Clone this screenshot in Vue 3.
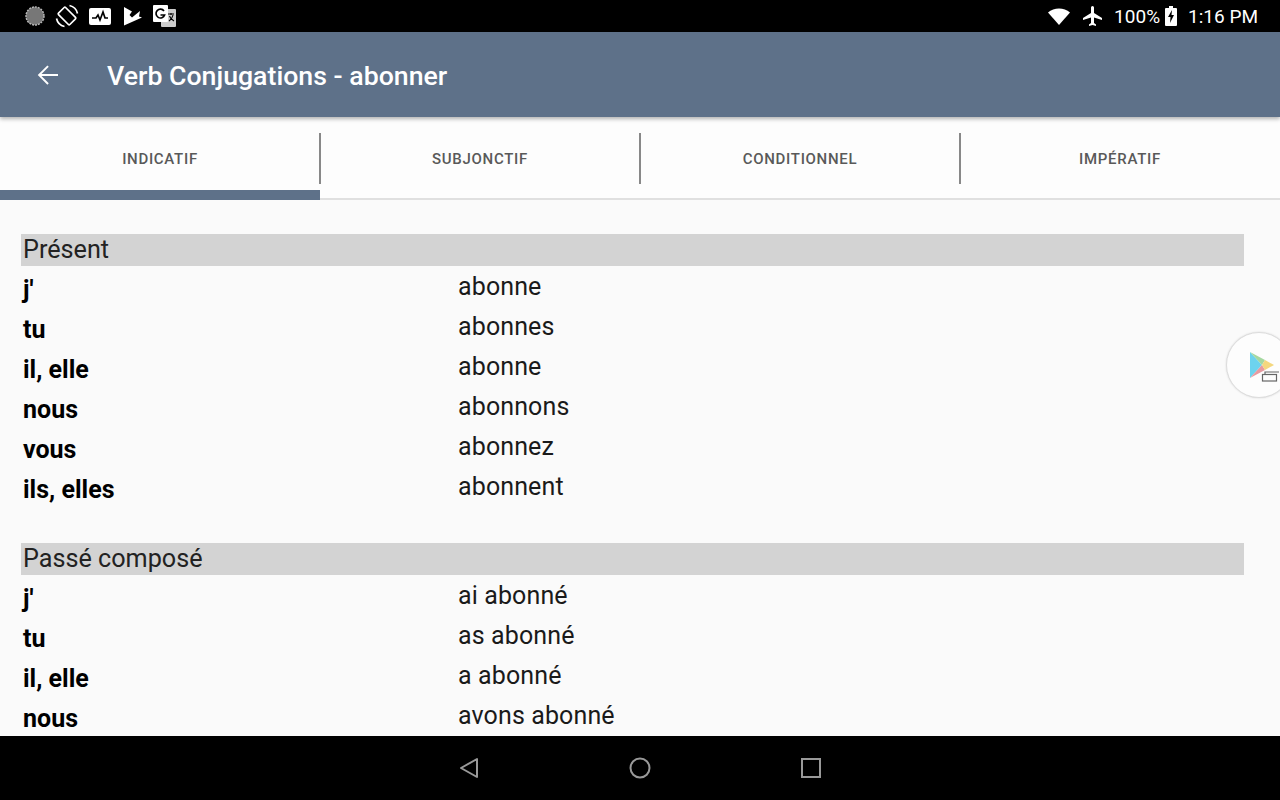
<template>
  <div class="screen">
    <div class="status-bar">
      <div class="status-left">
        <svg width="20" height="20" viewBox="0 0 20 20"><circle cx="10" cy="10" r="9" fill="#777" stroke="#bbb" stroke-width="1.4" stroke-dasharray="2 1" /></svg>
        <svg width="24" height="24" viewBox="0 0 24 24" fill="none" stroke="#fff" stroke-width="1.700">
          <rect x="7" y="4" width="10" height="16" rx="1" transform="rotate(-45 12 12)" />
          <path d="M14.500 1.500A10.500 10.500 0 0 1 22.500 9.500M9.500 22.500A10.500 10.500 0 0 1 1.500 14.500" />
        </svg>
        <svg width="22" height="17" viewBox="0 0 22 17">
          <rect width="22" height="17" rx="2" fill="#fff" />
          <path d="M3 10h4l2-3 2 5 3-8 2 6h3" fill="none" stroke="#000" stroke-width="1.700" />
        </svg>
        <svg class="check" width="18" height="19" viewBox="0 0 18 19">
          <path d="M0 0l8 4.500-2.500 3.500 2.500 2.500 8-6.500-1 5.500 3 1-18 8z" fill="#fff" />
        </svg>
        <svg width="23" height="22" viewBox="0 0 23 22">
          <rect x="8" y="4" width="15" height="18" rx="1" fill="#ccc" />
          <rect x="0" y="0" width="15" height="17" rx="1" fill="#fff" />
          <path d="M11 6a4.400 4.400 0 1 0 .6 4H7.500" fill="none" stroke="#000" stroke-width="1.700" />
          <path d="M15 9h6M18 8v2M20 10c-.6 3-2.400 5-4 6M16.500 11c.6 2 2.500 4 4.500 5" fill="none" stroke="#000" stroke-width="1.100" />
        </svg>
      </div>
      <div class="status-right">
        <svg class="wifi" width="22" height="17" viewBox="0 0 22 17">
          <path d="M0 4.500C6-1 16-1 22 4.500L11 17z" fill="#fff" />
        </svg>
        <svg class="plane" width="24" height="24" viewBox="0 0 24 24">
          <path d="M21 16v-2l-8-5V3.500a1.500 1.500 0 0 0-3 0V9l-8 5v2l8-2.500V19l-2 1.500V22l3.500-1 3.500 1v-1.500L13 19v-5.500z" fill="#fff" />
        </svg>
        <span class="pct">100%</span>
        <svg class="batt" width="12" height="20" viewBox="0 0 12 20">
          <path d="M4 0h4v2h3a1 1 0 0 1 1 1v16a1 1 0 0 1-1 1H1a1 1 0 0 1-1-1V3a1 1 0 0 1 1-1h3z" fill="#fff" />
          <path d="M7 4L3 11h2.500L5 17l4-8H6.500z" fill="#000" />
        </svg>
        <span class="clock">1:16 PM</span>
      </div>
    </div>

    <header class="toolbar">
      <svg class="back" width="30" height="30" viewBox="0 0 24 24">
        <path d="M20 11.200H6.800l5.800-5.800L11.500 4.300 3.800 12l7.700 7.700 1.100-1.100-5.800-5.800H20z" fill="#fff" />
      </svg>
      <h1 class="title">Verb Conjugations - abonner</h1>
    </header>

    <nav class="tabs">
      <div v-for="(tab, i) in tabs" :key="tab" class="tab" :class="{ active: i === 0 }">
        <span>{{ tab }}</span>
      </div>
    </nav>

    <main class="content">
      <section v-for="tense in tenses" :key="tense.name" class="tense">
        <div class="tense-name">{{ tense.name }}</div>
        <div v-for="row in tense.rows" :key="row[0]" class="row">
          <span class="pronoun">{{ row[0] }}</span>
          <span class="verb">{{ row[1] }}</span>
        </div>
      </section>
    </main>

    <div class="play-bubble">
      <svg width="32" height="32" viewBox="0 0 32 32">
        <path d="M2 1l12 13L2 27z" fill="#6dd3ee" />
        <path d="M2 1l15 8-3 5z" fill="#a5d8a0" />
        <path d="M2 27l15-8-3-5z" fill="#e79aa0" />
        <path d="M17 9l9 5-9 5-3-5z" fill="#f4d77e" />
        <rect x="14.500" y="23.500" width="14" height="6.500" fill="#fdfdfd" stroke="#666" stroke-width="1.200" />
        <path d="M17 23v-2h14" fill="none" stroke="#666" stroke-width="1.200" />
      </svg>
    </div>

    <footer class="nav-bar">
      <svg width="20" height="22" viewBox="0 0 20 22"><path d="M18 2v18L2 11z" fill="none" stroke="#999" stroke-width="2" stroke-linejoin="round" /></svg>
      <svg width="22" height="22" viewBox="0 0 22 22"><circle cx="11" cy="11" r="9.500" fill="none" stroke="#999" stroke-width="2" /></svg>
      <svg width="20" height="20" viewBox="0 0 20 20"><rect x="1" y="1" width="18" height="18" fill="none" stroke="#999" stroke-width="2" /></svg>
    </footer>
  </div>
</template>

<script setup>
const tabs = ['INDICATIF', 'SUBJONCTIF', 'CONDITIONNEL', 'IMPÉRATIF']

const tenses = [
  {
    name: 'Présent',
    rows: [
      ["j'", 'abonne'],
      ['tu', 'abonnes'],
      ['il, elle', 'abonne'],
      ['nous', 'abonnons'],
      ['vous', 'abonnez'],
      ['ils, elles', 'abonnent'],
    ],
  },
  {
    name: 'Passé composé',
    rows: [
      ["j'", 'ai abonné'],
      ['tu', 'as abonné'],
      ['il, elle', 'a abonné'],
      ['nous', 'avons abonné'],
    ],
  },
]
</script>

<style>
html, body { margin: 0; background: #000; overflow: hidden; }
</style>

<style scoped>
.screen {
  position: relative;
  width: 1280px;
  height: 800px;
  display: flex;
  flex-direction: column;
  overflow: hidden;
  background: #fafafa;
  font-family: Roboto, "Liberation Sans", sans-serif;
}

.status-bar {
  flex: 0 0 32px;
  display: flex;
  justify-content: space-between;
  align-items: center;
  background: #000;
  color: #fff;
  padding: 0 22px 0 25px;
}

.status-left { display: flex; align-items: center; gap: 10px; }
.status-left .check { margin: 0 1px 0 3px; }
.status-right { display: flex; align-items: center; }

.wifi { margin-right: 11px; }
.plane { margin-right: 9px; }
.pct { font-size: 19px; margin-right: 5px; }
.batt { margin-right: 11px; }
.clock { font-size: 19px; }

.toolbar {
  position: relative;
  z-index: 2;
  flex: 0 0 85px;
  display: flex;
  align-items: center;
  background: #5e7189;
  box-shadow: 0 2px 4px rgba(0, 0, 0, 0.3);
  padding-left: 33px;
}

.title {
  margin: 3px 0 0 44px;
  font-size: 26.700px;
  font-weight: 500;
  color: #fff;
}

.tabs {
  flex: 0 0 83px;
  display: flex;
  box-sizing: border-box;
  background: #fdfdfd;
  border-bottom: 2px solid #e0e0e0;
}

.tab {
  position: relative;
  flex: 1;
  display: flex;
  align-items: center;
  justify-content: center;
  padding-top: 3px;
  font-size: 15px;
  font-weight: 500;
  letter-spacing: 0.7px;
  color: #595959;
}

.tab:not(:last-child)::after {
  content: '';
  position: absolute;
  right: -1px;
  top: 16px;
  height: 51px;
  width: 2px;
  background: #888;
}

.tab.active::before {
  content: '';
  position: absolute;
  left: 0;
  right: 0;
  bottom: -2px;
  height: 10px;
  background: #5e7189;
}

.content {
  flex: 1;
  min-height: 0;
  overflow: hidden;
  padding: 34px 36px 0 21px;
}

.tense { margin-bottom: 37px; }

.tense-name {
  height: 32px;
  line-height: 31px;
  padding-left: 2px;
  font-size: 25.200px;
  color: #222;
  background: #d3d3d3;
}

.row {
  display: flex;
  height: 40px;
  padding-left: 2px;
  font-size: 25px;
  color: #1a1a1a;
}

.pronoun {
  width: 435px;
  line-height: 47px;
  font-weight: 700;
  color: #000;
}

.verb { line-height: 42px; letter-spacing: 0.12px; }

.play-bubble {
  position: absolute;
  left: 1226px;
  top: 332px;
  width: 66px;
  height: 66px;
  box-sizing: border-box;
  display: flex;
  align-items: center;
  padding: 3px 0 0 21px;
  border-radius: 50%;
  background: #fdfdfd;
  border: 1px solid #ddd;
  box-shadow: 0 0 2px rgba(0, 0, 0, 0.15);
}

.nav-bar {
  flex: 0 0 64px;
  display: flex;
  align-items: center;
  justify-content: center;
  gap: 150px;
  background: #000;
}
</style>
